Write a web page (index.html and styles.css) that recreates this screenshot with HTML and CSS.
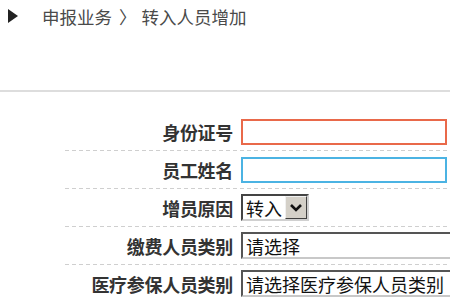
FILE: index.html
```html
<!DOCTYPE html>
<html lang="zh">
<head>
<meta charset="utf-8">
<title>转入人员增加</title>
<link rel="stylesheet" href="styles.css">
</head>
<body>
<div class="page">
  <nav class="crumbs">
    <svg class="crumb-icon" width="10" height="14" viewBox="0 0 10 14"><polygon points="0,0 10,7 0,14" fill="#222"/></svg>
    <span class="crumb">申报业务</span>
    <span class="crumb-sep">〉</span>
    <span class="crumb">转入人员增加</span>
  </nav>
  <div class="rule"></div>
  <form class="form">
    <div class="row">
      <label class="label">身份证号</label>
      <div class="field"><input class="text text-error" type="text"></div>
    </div>
    <div class="row">
      <label class="label">员工姓名</label>
      <div class="field"><input class="text text-focus" type="text"></div>
    </div>
    <div class="row">
      <label class="label">增员原因</label>
      <div class="field">
        <div class="select select-small">
          <span class="select-value">转入</span>
          <span class="select-btn"><svg width="14" height="10" viewBox="0 0 14 10"><polyline points="2,2 7,7 12,2" fill="none" stroke="#111" stroke-width="2.6"/></svg></span>
        </div>
      </div>
    </div>
    <div class="row">
      <label class="label">缴费人员类别</label>
      <div class="field">
        <div class="select select-wide"><span class="select-value">请选择</span></div>
      </div>
    </div>
    <div class="row">
      <label class="label">医疗参保人员类别</label>
      <div class="field">
        <div class="select select-wide"><span class="select-value">请选择医疗参保人员类别</span></div>
      </div>
    </div>
  </form>
</div>
</body>
</html>
```
FILE: styles.css
```css
html, body {
  margin: 0;
  padding: 0;
  background: #fff;
  overflow: hidden;
}
.page {
  width: 450px;
  height: 300px;
  overflow: hidden;
  font-family: "Noto Sans CJK SC", "Noto Sans", sans-serif;
}
.crumbs {
  display: flex;
  align-items: center;
  height: 32px;
  padding-left: 8px;
  color: #4a4a4a;
  font-size: 17.5px;
  white-space: nowrap;
}
.crumb-icon {
  margin-right: 24px;
  flex: none;
}
.crumb-sep {
  margin: 0 5px 0 7px;
}
.rule {
  margin-top: 58px;
  height: 2px;
  background: #ddd;
}
.form {
  margin: 21px 0 0 65px;
}
.row {
  display: grid;
  grid-template-columns: 168px 1fr;
  column-gap: 8px;
  align-items: center;
  height: 38px;
  box-sizing: border-box;
  padding-bottom: 1px;
  background-image: repeating-linear-gradient(to right, #cfcfcf 0 4px, transparent 4px 7px);
  background-size: 100% 1px;
  background-position: left bottom;
  background-repeat: no-repeat;
}
.label {
  text-align: right;
  font-weight: bold;
  font-size: 18px;
  color: #333;
  white-space: nowrap;
  letter-spacing: -0.3px;
}
.field {
  display: flex;
  align-items: center;
  min-width: 0;
}
.text {
  box-sizing: border-box;
  width: 206px;
  height: 26px;
  margin: 0;
  padding: 0 4px;
  background: #fff;
  outline: none;
}
.text-error {
  border: 2px solid #e9694a;
}
.text-focus {
  border: 2px solid #4bb3e3;
}
.select {
  box-sizing: border-box;
  display: flex;
  align-items: center;
  height: 27px;
  background: #fff;
  border-style: solid;
  border-width: 2px;
  border-color: #555 #c8c8c8 #c8c8c8 #555;
  font-size: 18px;
  color: #111;
  white-space: nowrap;
}
.select-small {
  width: 68px;
  border-color: #444 #d0d0d0 #d0d0d0 #444;
}
.select-wide {
  width: 260px;
  flex: none;
}
.select-value {
  padding-left: 3px;
  line-height: 1;
}
.select-small .select-value {
  flex: 1;
}
.select-btn {
  box-sizing: border-box;
  width: 22px;
  height: 23px;
  display: flex;
  align-items: center;
  justify-content: center;
  background: #d4d0c8;
  border: 1px solid #808080;
  border-color: #f0f0f0 #404040 #404040 #f0f0f0;
}
```
